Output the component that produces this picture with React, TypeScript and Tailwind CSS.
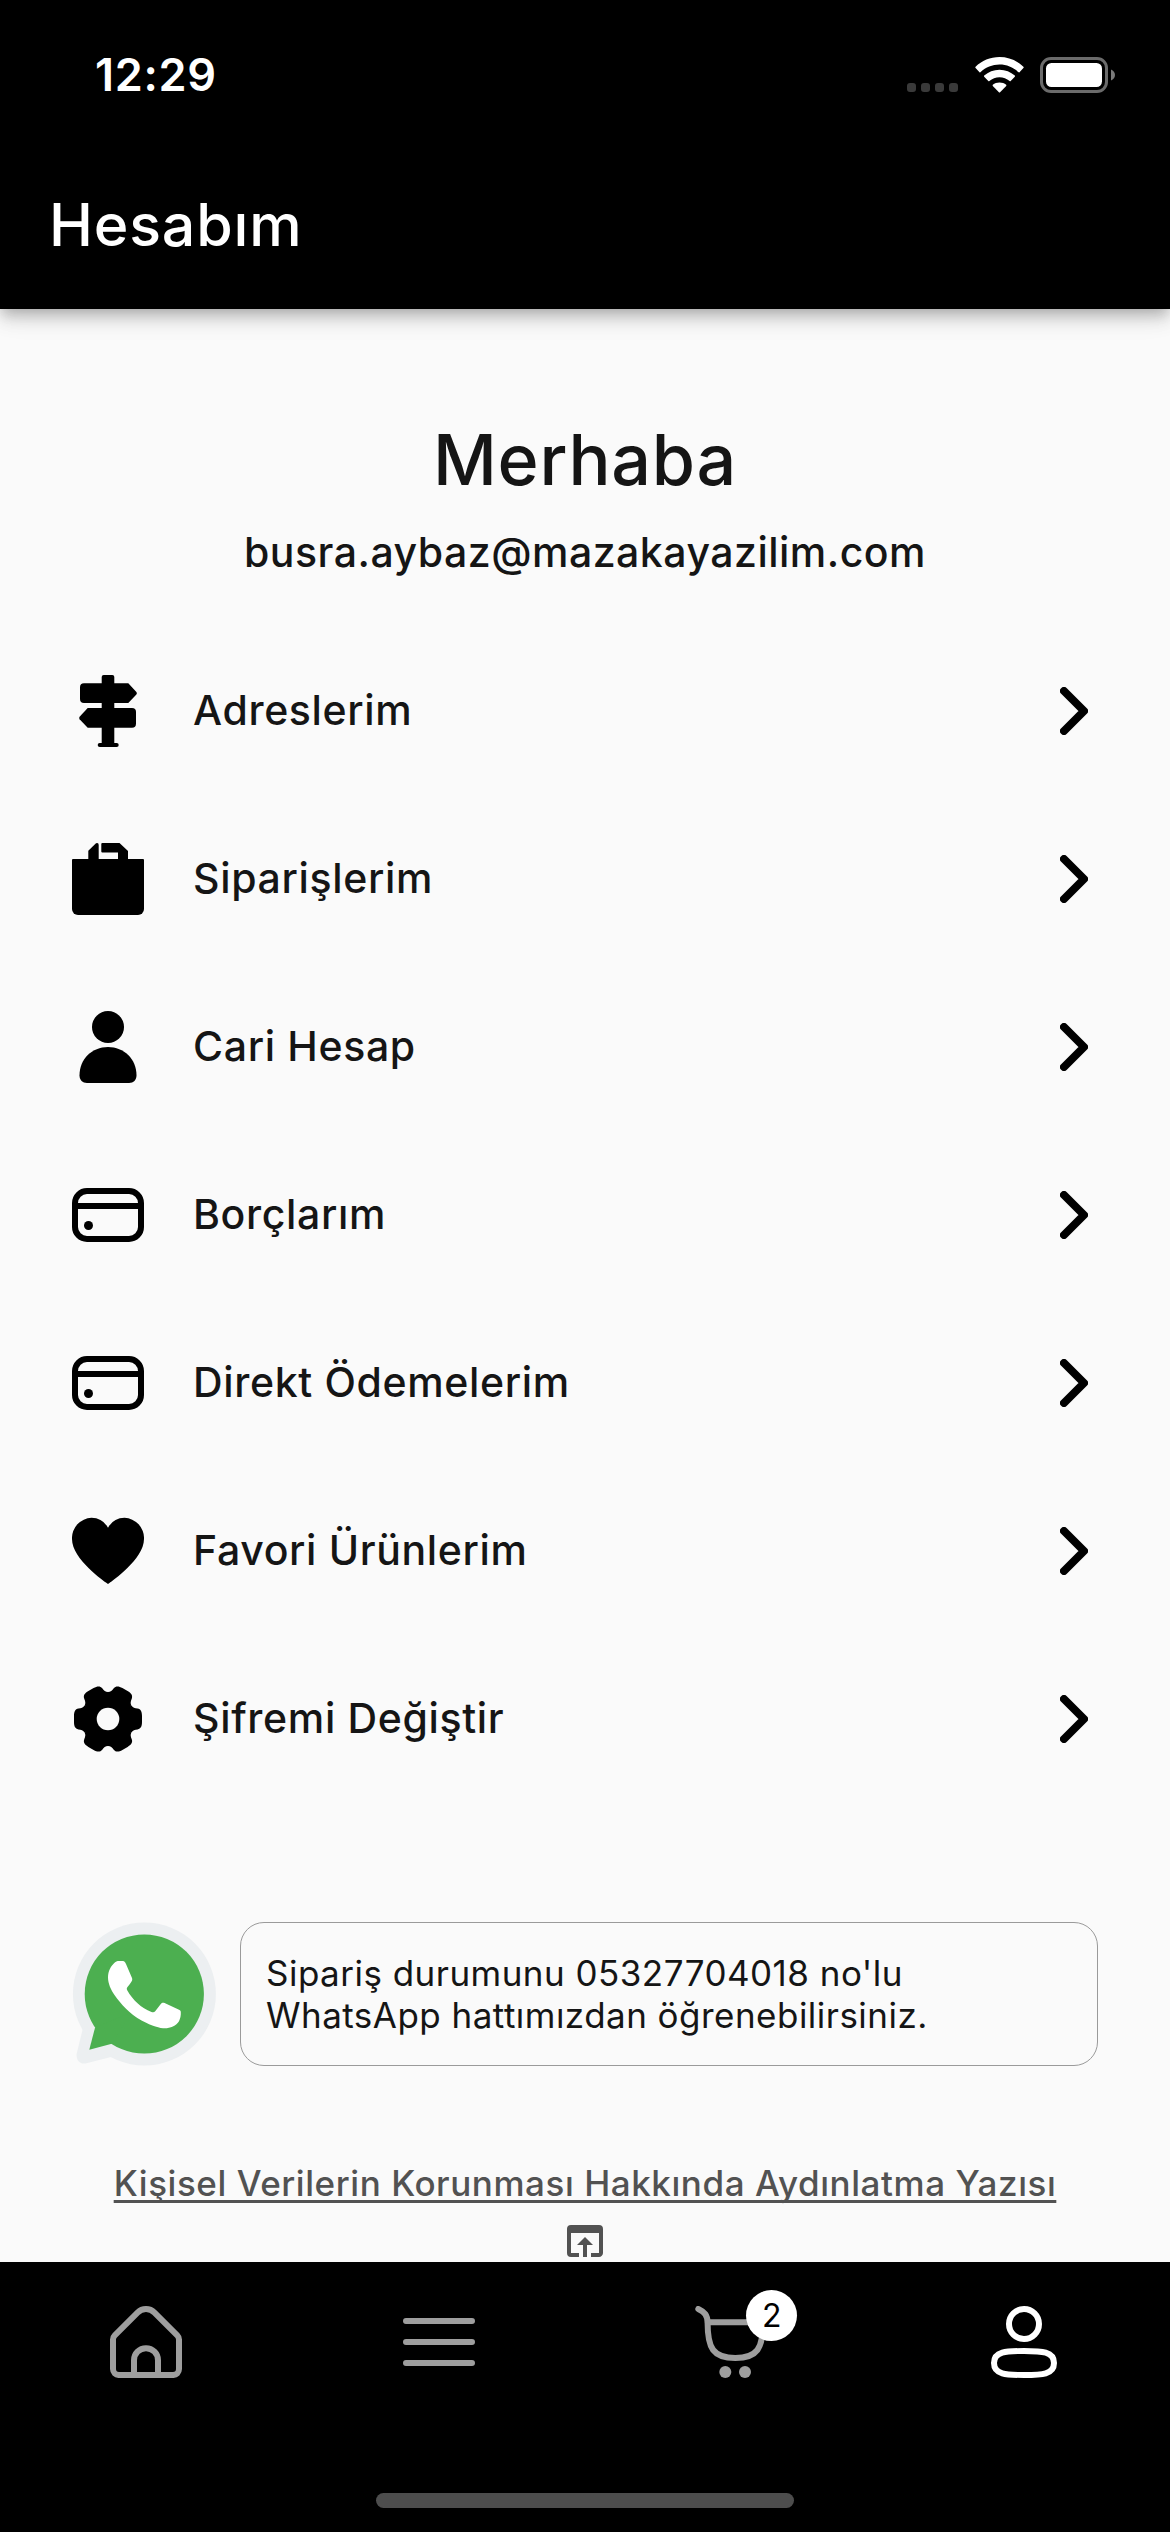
import type { ReactNode } from 'react';
import { MdOpenInBrowser } from 'react-icons/md';

function SignpostIcon() {
  return (
    <svg viewBox="0 0 72 72" className="size-[72px]">
      <rect x="29.7" y="0" width="12.6" height="70" rx="2" />
      <path d="M12 8.3H56.3L64.4 17q1 1.3 0 2.6L56.3 28H12a4 4 0 0 1-4-4V12.3a4 4 0 0 1 4-4Z" />
      <path d="M60 33H15.7L7.6 41.7q-1 1.3 0 2.6L15.7 52.7H60a4 4 0 0 0 4-4V37a4 4 0 0 0-4-4Z" />
      <rect x="25.7" y="68" width="21" height="4" rx="2" />
    </svg>
  );
}

function BagIcon() {
  return (
    <svg viewBox="0 0 72 72" className="size-[72px]">
      <path d="M1 16H71a1 1 0 0 1 1 1V66a6 6 0 0 1-6 6H6a6 6 0 0 1-6-6V17a1 1 0 0 1 1-1Z" />
      <path d="M16.3 17V7.7L24 .3q2.7-.8 2.7 1.7V17Z" />
      <path d="M29.3 1q0-1 1-1H47.500L56 8V17H46V9.500H30.300q-1 0-1-1Z" />
    </svg>
  );
}

function PersonIcon() {
  return (
    <svg viewBox="0 0 72 72" className="size-[72px]">
      <circle cx="36" cy="16" r="16" />
      <path d="M36 36C52 36 64.5 48 64.5 64.5C64.5 69 61.5 72 57 72H15C10.5 72 7.5 69 7.5 64.5C7.5 48 20 36 36 36Z" />
    </svg>
  );
}

function CardIcon() {
  return (
    <svg viewBox="0 0 72 72" className="size-[72px]">
      <rect x="3" y="12" width="66" height="48" rx="12" fill="none" stroke="black" strokeWidth="6" />
      <path d="M3 27H69" stroke="black" strokeWidth="6" />
      <circle cx="16.5" cy="46.5" r="4.5" />
    </svg>
  );
}

function HeartIcon() {
  return (
    <svg viewBox="0 0 24 24" className="size-[72px]">
      <path d="M17.5.917a6.4,6.4,0,0,0-5.5,3.3A6.4,6.4,0,0,0,6.5.917,6.8,6.8,0,0,0,0,7.967c0,6.775,10.956,14.2,11.422,14.6l.578.409.578-.409C13.044,22.167,24,14.742,24,7.967A6.8,6.8,0,0,0,17.5.917Z" />
    </svg>
  );
}

function GearIcon() {
  return (
    <svg viewBox="-36 -36 72 72" className="size-[72px]">
      {[0, 60, 120, 180, 240, 300].map((angle) => (
        <path
          key={angle}
          transform={`rotate(${angle})`}
          d="M0 0L23.4-13.5C24.6-11.4 27-10.6 29.5-10.4C33-9.8 34-7 34-3V3C34 7 33 9.8 29.5 10.4C27 10.6 24.6 11.4 23.4 13.5Z"
        />
      ))}
      <circle r="26" />
      <circle r="11.3" fill="#fafafa" />
    </svg>
  );
}

function Chevron() {
  return (
    <svg viewBox="0 0 28 48" className="w-7 h-12 mr-[10px]" fill="none" stroke="black" strokeWidth="8" strokeLinecap="round" strokeLinejoin="round">
      <path d="M4 4L24 24L4 44" />
    </svg>
  );
}

function WhatsAppLogo() {
  return (
    <svg viewBox="0 0 144 144" className="size-36 shrink-0">
      <g fill="#eceff1">
        <circle cx="72.4" cy="72" r="71.5" />
        <path d="M11 106L4.8 131C3.4 137.5 8 143 14.5 141.3L40 134.7L60 100Z" />
      </g>
      <g fill="#4caf50">
        <circle cx="72.3" cy="72" r="59.6" />
        <path d="M23 105.7L17.3 127.7L39.8 121.7L60 90Z" />
      </g>
      <path
        fill="#fff"
        d="M47 39H49.5C52 39 53 39.5 54 42L60 56C60.4 57.3 60.3 58.3 59.7 59.3C58.5 61.5 57 63.3 55.5 65C54.7 66 54.5 67 55.2 68.2C61 78.5 69 85.5 79.5 90C81 90.6 82.2 90.5 83.2 89.3L88.8 82.1C89.8 80.7 91 80.5 92.6 81.1L106.5 87.6C108 88.3 108.8 88.9 108.8 90C109 93.5 108.3 96.5 107 99.2C104.5 103.5 98 106.3 93 106.3C88 106.3 80 104 70 98.7C57 91.5 49 82 42.5 73C39 68 36 61.5 36 55.5C36 49 38.8 44.5 41.8 41.4C43.5 39.6 45.3 39 47 39Z"
      />
    </svg>
  );
}

function HomeIcon() {
  return (
    <svg viewBox="0 0 24 24" className="size-[72px]" fill="#9e9e9e">
      <path d="M23.121,9.069,15.536,1.483a5.008,5.008,0,0,0-7.072,0L.879,9.069A2.978,2.978,0,0,0,0,11.19v9.817a3,3,0,0,0,3,3H21a3,3,0,0,0,3-3V11.19A2.978,2.978,0,0,0,23.121,9.069ZM15,22.007H9V18.073a3,3,0,0,1,6,0Zm7-1a1,1,0,0,1-1,1H17V18.073a5,5,0,0,0-10,0v3.934H3a1,1,0,0,1-1-1V11.19a1.008,1.008,0,0,1,.293-.707L9.878,2.9a3.008,3.008,0,0,1,4.244,0l7.585,7.586A1.008,1.008,0,0,1,22,11.19Z" />
    </svg>
  );
}

function MenuIcon() {
  return (
    <svg viewBox="0 0 72 72" className="size-[72px]" stroke="#9e9e9e" strokeWidth="6" strokeLinecap="round">
      <path d="M3 15H69M3 36H69M3 57H69" />
    </svg>
  );
}

function CartIcon() {
  return (
    <svg viewBox="0 0 72 72" className="size-[72px]" fill="none" stroke="#9e9e9e" strokeWidth="6" strokeLinecap="round">
      <path d="M3.3 3C9.5 6 12.6 9 12.6 17C12.6 42 18 52 40.3 52C62.5 52 68 42 68 17" />
      <path d="M13 16.3H68" />
      <g fill="#9e9e9e" stroke="none">
        <circle cx="30.3" cy="66" r="6" />
        <circle cx="50" cy="66" r="6" />
      </g>
    </svg>
  );
}

function UserIcon() {
  return (
    <svg viewBox="0 0 72 72" className="size-[72px]" fill="none" stroke="white" strokeWidth="6">
      <circle cx="36" cy="18" r="15" />
      <path d="M36 45C54 45 66 45.5 66 57C66 68.5 54 69 36 69C18 69 6 68.5 6 57C6 45.5 18 45 36 45Z" />
    </svg>
  );
}

function StatusBar() {
  return (
    <div className="flex h-[141px] items-start justify-between pl-[95px] pr-[55px] pt-[50px]">
      <span className="text-[45px] leading-[49px] font-semibold tracking-[0.015em]">12:29</span>
      <div className="flex h-[49px] items-center">
        <div className="flex gap-[5px] pt-[25px]">
          {[0, 1, 2, 3].map((dot) => (
            <span key={dot} className="size-[9px] rounded-[3px] bg-[#3a3a3a]" />
          ))}
        </div>
        <svg viewBox="0 0 49 36" className="ml-[17px] h-9 w-[49px]" fill="white">
          <path d="M24.5 0C33.7 0 42.3 3.6 48.4 9.8Q49 10.5 48.4 11.1L44.5 15.2Q43.9 15.7 43.3 15.1C38.3 10.4 31.7 7.6 24.5 7.6C17.3 7.6 10.7 10.4 5.7 15.1Q5.1 15.7 4.5 15.2L.6 11.1Q0 10.5 .6 9.8C6.7 3.6 15.3 0 24.5 0Z" />
          <path d="M24.5 12.7C30.4 12.7 35.7 14.9 39.8 18.6Q40.4 19.2 39.8 19.8L35.7 24Q35.2 24.5 34.6 24C31.8 21.6 28.3 20.2 24.5 20.2C20.7 20.2 17.2 21.6 14.4 24Q13.8 24.5 13.3 24L9.2 19.8Q8.6 19.2 9.2 18.6C13.3 14.9 18.6 12.7 24.5 12.7Z" />
          <path d="M24.5 25.4C27 25.4 29.4 26.2 31.2 27.7Q31.7 28.3 31.2 28.9L25.1 35.2Q24.5 35.7 23.9 35.2L17.8 28.9Q17.3 28.3 17.8 27.7C19.6 26.2 22 25.4 24.5 25.4Z" />
        </svg>
        <svg viewBox="0 0 75 36" className="ml-4 h-9 w-[75px]">
          <rect x="1.5" y="1.5" width="65" height="33" rx="9.5" fill="none" stroke="#6b6b6b" strokeWidth="3" />
          <rect x="6" y="6" width="56" height="24" rx="5.5" fill="white" />
          <path d="M71 12.5C73.5 13.5 75 15.5 75 18S73.5 22.5 71 23.5Z" fill="#7a7a7a" />
        </svg>
      </div>
    </div>
  );
}

const menuItems: { label: string; icon: ReactNode }[] = [
  { label: 'Adreslerim', icon: <SignpostIcon /> },
  { label: 'Siparişlerim', icon: <BagIcon /> },
  { label: 'Cari Hesap', icon: <PersonIcon /> },
  { label: 'Borçlarım', icon: <CardIcon /> },
  { label: 'Direkt Ödemelerim', icon: <CardIcon /> },
  { label: 'Favori Ürünlerim', icon: <HeartIcon /> },
  { label: 'Şifremi Değiştir', icon: <GearIcon /> },
];

export default function App() {
  return (
    <div className="flex h-[2532px] w-[1170px] flex-col overflow-hidden bg-[#fafafa] font-['Inter',sans-serif] text-[#151515]">
      <header className="relative z-10 h-[309px] shrink-0 bg-black text-white shadow-[0_6px_12px_-3px_rgba(0,0,0,0.2),0_12px_15px_rgba(0,0,0,0.1),0_3px_30px_rgba(0,0,0,0.1)]">
        <StatusBar />
        <h1 className="pl-[49px] text-[59px] leading-[168px] font-medium tracking-[0.014em]">Hesabım</h1>
      </header>

      <main className="flex min-h-0 flex-1 flex-col overflow-hidden">
        <div className="pt-[109px] text-center">
          <h2 className="text-[70px] leading-[84px] font-medium tracking-[0.011em]">Merhaba</h2>
          <p className="mt-[26px] text-[41px] leading-[48px] font-medium tracking-[0.012em]">
            busra.aybaz@mazakayazilim.com
          </p>
        </div>

        <ul className="mt-[51px] px-[72px]">
          {menuItems.map((item) => (
            <li key={item.label} className="flex h-[168px] items-center">
              {item.icon}
              <span className="ml-[49px] flex-1 pb-0.5 text-[41px] leading-[48px] font-medium tracking-[0.016em]">
                {item.label}
              </span>
              <Chevron />
            </li>
          ))}
        </ul>

        <div className="mt-[119px] flex shrink-0 items-center gap-6 px-[72px]">
          <WhatsAppLogo />
          <div className="flex h-36 flex-1 flex-col justify-center rounded-[24px] border border-[#9a9a9a] pl-[25px] text-[35px] leading-[42px] tracking-[0.0135em]">
            <p>Sipariş durumunu 05327704018 no'lu</p>
            <p>WhatsApp hattımızdan öğrenebilirsiniz.</p>
          </div>
        </div>

        <div className="flex shrink-0 flex-col items-center pt-[96px] text-[#525252]">
          <a className="text-[35px] leading-[42px] font-medium tracking-[0.016em] underline decoration-[3px] underline-offset-[4px] [text-decoration-skip-ink:none]">
            Kişisel Verilerin Korunması Hakkında Aydınlatma Yazısı
          </a>
          <MdOpenInBrowser className="mt-[13px] size-12" />
        </div>
      </main>

      <nav className="flex h-[270px] shrink-0 flex-col justify-between bg-black pb-6 pt-11">
        <div className="grid grid-cols-4 justify-items-center">
          <HomeIcon />
          <MenuIcon />
          <div className="relative">
            <CartIcon />
            <span className="absolute -top-4 left-[51px] flex size-[51px] items-center justify-center rounded-full bg-white text-[32px] text-black">
              2
            </span>
          </div>
          <UserIcon />
        </div>
        <div className="h-[15px] w-[418px] self-center rounded-full bg-[#4d4d4d]" />
      </nav>
    </div>
  );
}
